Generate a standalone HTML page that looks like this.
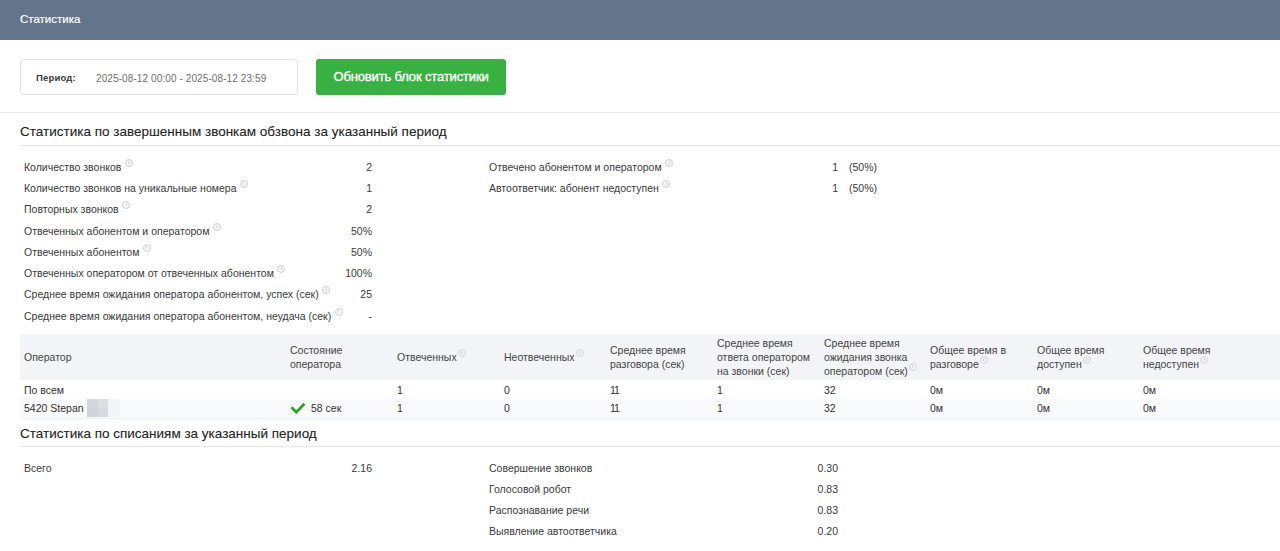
<!DOCTYPE html>
<html lang="ru">
<head>
<meta charset="utf-8">
<title>Статистика</title>
<style>
*{box-sizing:border-box;margin:0;padding:0}
html,body{width:1280px;height:551px;overflow:hidden;background:#fff}
body{font-family:"Liberation Sans",sans-serif;font-size:10.5px;color:#3a3a3a;position:relative}
.hdr{position:absolute;left:0;top:0;width:1280px;height:40px;background:#64748b;color:#fff;font-size:11.5px;line-height:39px;padding-left:20px;-webkit-text-stroke:0.2px #fff}
.period{position:absolute;left:20px;top:59px;width:278px;height:36px;border:1px solid #e3e3e3;border-radius:4px;background:#fff}
.period b{position:absolute;left:15px;top:1px;line-height:34px;font-size:9.5px;font-weight:700;color:#3a3a3a;letter-spacing:0.17px}
.period span{position:absolute;left:75px;top:2px;line-height:34px;font-size:10px;color:#707070;letter-spacing:0.1px}
.btn{position:absolute;left:316px;top:59px;width:190px;height:36px;background:#37b13f;border-radius:3px;color:#fff;font-size:13px;font-weight:400;-webkit-text-stroke:0.35px #fff;letter-spacing:-0.15px;text-align:center;line-height:35px}
.hr{position:absolute;left:0;width:1280px;height:1px;background:#e8e8e8}
.h2{position:absolute;left:20px;font-size:13.5px;-webkit-text-stroke:0.1px #2a2a2a;color:#222;white-space:nowrap}
.row{position:absolute;white-space:nowrap;font-size:10.5px;line-height:14px;color:#3a3a3a}
.val{position:absolute;white-space:nowrap;font-size:10.5px;line-height:14px;color:#3a3a3a;text-align:right}
.i{display:inline-block;width:8px;height:8px;border:1.3px solid #d0d0d5;border-radius:50%;vertical-align:top;margin-left:3.5px;margin-top:-1.5px;position:relative;background:#f6f6f8}
.i:after{content:"";position:absolute;left:2.5px;top:1.5px;width:1px;height:3px;background:#d8d8dc}
.th .i{margin-left:1px;border-color:#d6d7db;background:#eef0f4}
.thead{position:absolute;left:20px;top:334px;width:1260px;height:46px;background:#f2f4f8}
.tr2{position:absolute;left:20px;top:399px;width:1260px;height:20px;background:#f9fafb;border-bottom:1px solid #f0f1f4}
.th{position:absolute;font-size:10.5px;line-height:14px;color:#444;white-space:nowrap}
.td{position:absolute;font-size:10.5px;line-height:14px;color:#333;white-space:nowrap}
</style>
</head>
<body>
<div class="hdr">Статистика</div>

<div class="period"><b>Период:</b><span>2025-08-12 00:00 - 2025-08-12 23:59</span></div>
<div class="btn">Обновить блок статистики</div>
<div class="hr" style="top:112px"></div>

<div class="h2" style="top:124px">Статистика по завершенным звонкам обзвона за указанный период</div>
<div class="hr" style="top:145px;left:20px"></div>

<div class="row" style="left:24px;top:160px">Количество звонков<i class="i"></i></div><div class="val" style="right:908px;top:160px">2</div>
<div class="row" style="left:24px;top:181px">Количество звонков на уникальные номера<i class="i"></i></div><div class="val" style="right:908px;top:181px">1</div>
<div class="row" style="left:24px;top:202px">Повторных звонков<i class="i"></i></div><div class="val" style="right:908px;top:202px">2</div>
<div class="row" style="left:24px;top:224px">Отвеченных абонентом и оператором<i class="i"></i></div><div class="val" style="right:908px;top:224px">50%</div>
<div class="row" style="left:24px;top:245px">Отвеченных абонентом<i class="i"></i></div><div class="val" style="right:908px;top:245px">50%</div>
<div class="row" style="left:24px;top:266px">Отвеченных оператором от отвеченных абонентом<i class="i"></i></div><div class="val" style="right:908px;top:266px">100%</div>
<div class="row" style="left:24px;top:287px">Среднее время ожидания оператора абонентом, успех (сек)<i class="i"></i></div><div class="val" style="right:908px;top:287px">25</div>
<div class="row" style="left:24px;top:309px">Среднее время ожидания оператора абонентом, неудача (сек)<i class="i"></i></div><div class="val" style="right:908px;top:309px">-</div>

<div class="row" style="left:489px;top:160px">Отвечено абонентом и оператором<i class="i"></i></div><div class="val" style="right:442px;top:160px">1</div><div class="row" style="left:849px;top:160px">(50%)</div>
<div class="row" style="left:489px;top:181px">Автоответчик: абонент недоступен<i class="i"></i></div><div class="val" style="right:442px;top:181px">1</div><div class="row" style="left:849px;top:181px">(50%)</div>

<div class="thead"></div>
<div class="tr2"></div>

<div class="th" style="left:24px;top:350px">Оператор</div>
<div class="th" style="left:290px;top:343px">Состояние<br>оператора</div>
<div class="th" style="left:397px;top:350px">Отвеченных<i class="i"></i></div>
<div class="th" style="left:504px;top:350px">Неотвеченных<i class="i"></i></div>
<div class="th" style="left:610px;top:343px">Среднее время<br>разговора (сек)</div>
<div class="th" style="left:717px;top:336px">Среднее время<br>ответа оператором<br>на звонки (сек)</div>
<div class="th" style="left:824px;top:336px">Среднее время<br>ожидания звонка<br>оператором (сек)<i class="i"></i></div>
<div class="th" style="left:930px;top:343px">Общее время в<br>разговоре<i class="i"></i></div>
<div class="th" style="left:1037px;top:343px">Общее время<br>доступен<i class="i"></i></div>
<div class="th" style="left:1143px;top:343px">Общее время<br>недоступен<i class="i"></i></div>

<div class="td" style="left:24px;top:383px">По всем</div>
<div class="td" style="left:397px;top:383px">1</div>
<div class="td" style="left:504px;top:383px">0</div>
<div class="td" style="left:610px;top:383px;letter-spacing:-1px">11</div>
<div class="td" style="left:717px;top:383px">1</div>
<div class="td" style="left:824px;top:383px">32</div>
<div class="td" style="left:930px;top:383px">0м</div>
<div class="td" style="left:1037px;top:383px">0м</div>
<div class="td" style="left:1143px;top:383px">0м</div>

<div class="td" style="left:24px;top:401px">5420 Stepan</div>
<div style="position:absolute;left:87px;top:399px;width:11px;height:9px;background:#d6d7dc"></div><div style="position:absolute;left:87px;top:408px;width:11px;height:9px;background:#d2d3d8"></div><div style="position:absolute;left:98px;top:399px;width:10px;height:9px;background:#dedfe3"></div><div style="position:absolute;left:98px;top:408px;width:10px;height:9px;background:#d8d9de"></div><div style="position:absolute;left:108px;top:399px;width:12px;height:18px;background:#f4f5f8"></div>
<svg style="position:absolute;left:289px;top:401px" width="18" height="15" viewBox="289 401 18 15"><path d="M291.4 407.3 L296.3 412.1 L304.4 403.8" fill="none" stroke="#1fa81f" stroke-width="2.7" stroke-linecap="butt" stroke-linejoin="miter"/></svg>
<div class="td" style="left:311px;top:401px">58 сек</div>
<div class="td" style="left:397px;top:401px">1</div>
<div class="td" style="left:504px;top:401px">0</div>
<div class="td" style="left:610px;top:401px;letter-spacing:-1px">11</div>
<div class="td" style="left:717px;top:401px">1</div>
<div class="td" style="left:824px;top:401px">32</div>
<div class="td" style="left:930px;top:401px">0м</div>
<div class="td" style="left:1037px;top:401px">0м</div>
<div class="td" style="left:1143px;top:401px">0м</div>

<div class="h2" style="top:426px">Статистика по списаниям за указанный период</div>
<div class="hr" style="top:446px;left:20px"></div>

<div class="row" style="left:24px;top:461px">Всего</div><div class="val" style="right:908px;top:461px">2.16</div>
<div class="row" style="left:489px;top:461px">Совершение звонков</div><div class="val" style="right:442px;top:461px">0.30</div>
<div class="row" style="left:489px;top:482px">Голосовой робот</div><div class="val" style="right:442px;top:482px">0.83</div>
<div class="row" style="left:489px;top:503px">Распознавание речи</div><div class="val" style="right:442px;top:503px">0.83</div>
<div class="row" style="left:489px;top:524px">Выявление автоответчика</div><div class="val" style="right:442px;top:524px">0.20</div>
</body>
</html>
